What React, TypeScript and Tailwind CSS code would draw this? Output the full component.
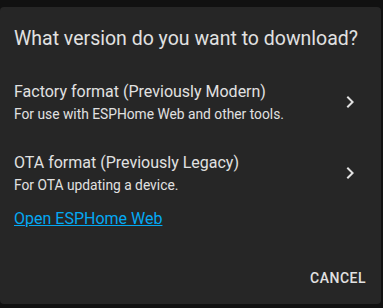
import React from "react";

function Chevron() {
  return (
    <svg width="24" height="24" viewBox="0 0 24 24" className="shrink-0">
      <path d="M8.59,16.58L13.17,12L8.59,7.41L10,6L16,12L10,18L8.59,16.58Z" fill="#e1e1e1" />
    </svg>
  );
}

function Item({ title, sub }: { title: string; sub: string }) {
  return (
    <div className="flex items-center justify-between pl-[14px] pr-[19px] h-[56px]">
      <div className="flex flex-col">
        <div className="text-[16px] leading-[24px] text-[#e1e1e1]">{title}</div>
        <div className="text-[13.8px] leading-[20px] text-[#e1e1e1]">{sub}</div>
      </div>
      <Chevron />
    </div>
  );
}

export default function App() {
  return (
    <div className="w-[383px] h-[308px] bg-[#111111] pt-[7px] overflow-hidden" style={{ fontFamily: "Roboto, sans-serif" }}>
      <div className="w-[381px] h-[297px] bg-[#262626] rounded-[4px] flex flex-col">
        <div className="pl-[14px] pt-[16px] text-[19.5px] leading-[32px] text-[#e1e1e1]">What version do you want to download?</div>
        <div className="mt-[19px] flex flex-col gap-[15px]">
          <Item title="Factory format (Previously Modern)" sub="For use with ESPHome Web and other tools." />
          <Item title="OTA format (Previously Legacy)" sub="For OTA updating a device." />
        </div>
        <div className="pl-[14px] mt-[6px]">
          <a className="text-[16px] leading-[24px] text-[#03a9f4] underline">Open ESPHome Web</a>
        </div>
        <div className="flex justify-end pr-[15px] mt-auto pb-[16px]">
          <span className="text-[14px] leading-[20px] font-medium tracking-[0.5px] text-[#e1e1e1]">CANCEL</span>
        </div>
      </div>
    </div>
  );
}
